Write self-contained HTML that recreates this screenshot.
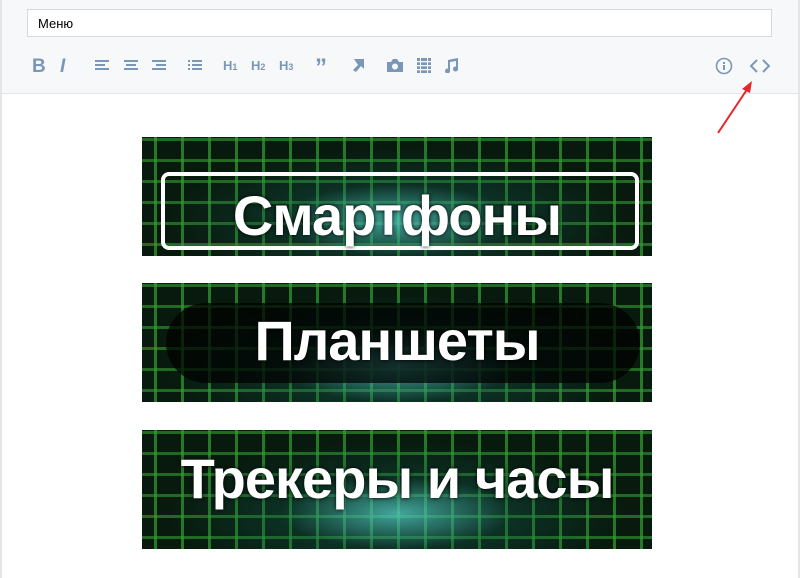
<!DOCTYPE html>
<html><head><meta charset="utf-8"><style>
body{margin:0;width:800px;height:578px;background:#fff;font-family:"Liberation Sans",sans-serif;position:relative;overflow:hidden}
.top{position:absolute;left:0;top:0;width:800px;height:93px;background:#f7f8fa;border-bottom:1px solid #e3e5e8}
.lb{position:absolute;left:0;top:0;width:2px;height:578px;background:#e3e5e8}
.rb{position:absolute;right:0;top:0;width:2px;height:578px;background:#e3e5e8}
.inp{position:absolute;left:27px;top:9px;height:28px;background:#fff;border:1px solid #d3d9de;font-size:13px;line-height:28px;padding-left:10px;box-sizing:border-box;width:745px}
.ic{position:absolute;top:56px;color:#7a97b8;font-weight:bold;font-size:14px}
.ban{position:absolute;left:142px;width:510px;height:119px;overflow:hidden;
background:
radial-gradient(ellipse 45% 60% at 50% 70%,rgba(80,200,190,.8),rgba(20,90,80,.35) 50%,rgba(0,0,0,0) 100%),
repeating-linear-gradient(90deg,transparent 0 12px,rgba(50,160,50,.7) 12px 15px,transparent 15px 27px),
repeating-linear-gradient(0deg,transparent 0 10px,rgba(50,160,50,.6) 10px 13px,transparent 13px 21px),
#081a0e}
.t{position:absolute;left:0;right:0;text-align:center;color:#fff;font-weight:bold;font-size:56px;white-space:nowrap;font-family:"Liberation Sans",sans-serif;letter-spacing:-1px;text-shadow:0 0 4px #000}
</style></head><body>
<div class="top"></div><div class="lb"></div><div class="rb"></div>
<div class="inp">Меню</div>
<div class="ic" style="left:32px;font-size:19px">B</div>
<div class="ic" style="left:60px;font-size:19px;font-style:italic">I</div>
<svg style="position:absolute;left:95px;top:59px" width="80" height="14" fill="#7a97b8">
<rect x="0" y="1" width="14" height="2"/><rect x="0" y="5" width="10" height="2"/><rect x="0" y="9" width="14" height="2"/>
<rect x="29" y="1" width="14" height="2"/><rect x="31" y="5" width="10" height="2"/><rect x="29" y="9" width="14" height="2"/>
<rect x="57" y="1" width="14" height="2"/><rect x="61" y="5" width="10" height="2"/><rect x="57" y="9" width="14" height="2"/>
</svg>
<svg style="position:absolute;left:188px;top:59px" width="16" height="14" fill="#7a97b8"><rect x="0" y="1" width="2" height="2"/><rect x="4" y="1" width="10" height="2"/><rect x="0" y="5" width="2" height="2"/><rect x="4" y="5" width="10" height="2"/><rect x="0" y="9" width="2" height="2"/><rect x="4" y="9" width="10" height="2"/></svg>
<div class="ic" style="left:223px;top:58px;font-size:13px">H<span style="font-size:9px">1</span></div>
<div class="ic" style="left:251px;top:58px;font-size:13px">H<span style="font-size:9px">2</span></div>
<div class="ic" style="left:279px;top:58px;font-size:13px">H<span style="font-size:9px">3</span></div>
<div class="ic" style="left:315px;font-size:24px;top:58px;line-height:20px">”</div>
<svg style="position:absolute;left:352px;top:59px" width="12" height="13" fill="#7a97b8"><path d="M2 0h10v10l-3-3-5 6-3-2 5-5z"/></svg>
<svg style="position:absolute;left:387px;top:59px" width="16" height="13" fill="#7a97b8"><path d="M0 3h4l2-3h4l2 3h4v10H0z"/><circle cx="8" cy="7.5" r="3" fill="#f7f8fa"/></svg>
<svg style="position:absolute;left:417px;top:58px" width="14" height="15" fill="#7a97b8"><rect x="0" y="0" width="3" height="15"/><rect x="11" y="0" width="3" height="15"/><rect x="4" y="0" width="6" height="15"/><rect x="0" y="3" width="14" height="1.3" fill="#f7f8fa"/><rect x="0" y="7" width="14" height="1.3" fill="#f7f8fa"/><rect x="0" y="11" width="14" height="1.3" fill="#f7f8fa"/></svg>
<svg style="position:absolute;left:444px;top:58px" width="14" height="15" fill="#7a97b8"><path d="M4 2l10-2v11a2.5 2.5 0 1 1-2-2.4V3L6 4v9a2.5 2.5 0 1 1-2-2.4z"/></svg>
<svg style="position:absolute;left:715px;top:57px" width="18" height="18"><circle cx="9" cy="9" r="7.5" fill="none" stroke="#7a97b8" stroke-width="1.6"/><rect x="8" y="8" width="2" height="5" fill="#7a97b8"/><rect x="8" y="5" width="2" height="2" fill="#7a97b8"/></svg>
<svg style="position:absolute;left:750px;top:58px" width="20" height="16" fill="none" stroke="#7a97b8" stroke-width="2"><path d="M7 2L1 8l6 6M13 2l6 6-6 6"/></svg>
<svg style="position:absolute;left:712px;top:78px" width="45" height="58"><path d="M6 55L36 10" stroke="#e8262a" stroke-width="2"/><path d="M40 3l-10 8 8 4z" fill="#e8262a"/></svg>
<div class="ban" style="top:137px"><div style="position:absolute;left:19px;top:35px;width:478px;height:78px;border:4px solid #fff;border-radius:8px;box-sizing:border-box"></div><div class="t" style="top:46px">Смартфоны</div></div>
<div class="ban" style="top:283px"><div style="position:absolute;left:24px;top:20px;width:474px;height:80px;border-radius:40px;background:rgba(0,0,0,.72)"></div><div class="t" style="top:25px">Планшеты</div></div>
<div class="ban" style="top:430px"><div class="t" style="top:16px">Трекеры и часы</div></div>
</body></html>
